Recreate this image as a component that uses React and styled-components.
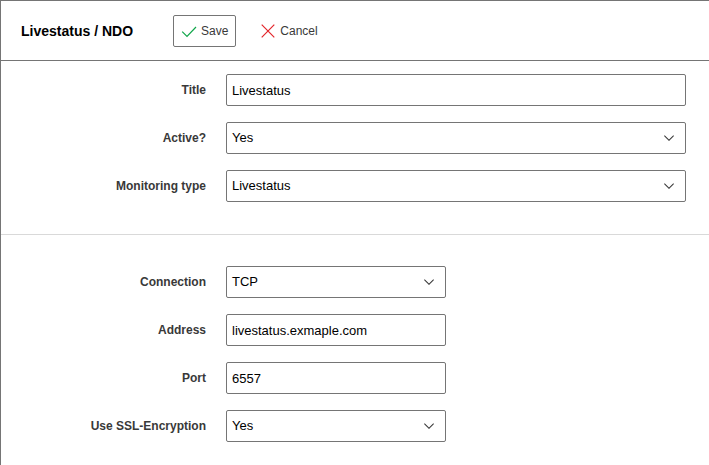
import React from "react";
import styled, { createGlobalStyle } from "styled-components";

const GlobalStyle = createGlobalStyle`
  *, *::before, *::after { box-sizing: border-box; }
  body {
    margin: 0;
    overflow: hidden;
    background: #fff;
    font-family: "Liberation Sans", Arial, sans-serif;
    font-size: 12px;
    color: #393939;
  }
`;

const Panel = styled.main`
  height: 100vh;
  border: solid #757575;
  border-width: 1px 0 0 1px;
`;

const Header = styled.header`
  display: flex;
  align-items: center;
  height: 60px;
  padding-left: 20px;
  border-bottom: 1px solid #757575;
`;

const Heading = styled.h1`
  width: 152px;
  margin: 0;
  font-size: 14px;
  line-height: 20px;
  color: #000;
`;

const ActionButton = styled.button`
  display: flex;
  align-items: center;
  gap: 4px;
  height: 32px;
  padding: 0 7px;
  margin-right: 16px;
  border: 1px solid ${(p) => (p.$outlined ? "#757575" : "transparent")};
  border-radius: 2px;
  background: #fff;
  font: inherit;
  line-height: 16px;
  color: #393939;
`;

const ActionIcon = styled.svg`
  display: block;
  width: 16px;
  height: 16px;
  fill: none;
  stroke: ${(p) => p.$color};
  stroke-width: 1.2;
`;

const Section = styled.section`
  display: flex;
  flex-direction: column;
  gap: 16px;
  padding: ${(p) => p.$top}px 23px 32px 0;

  & + & { border-top: 1px solid #d9d9d9; }
`;

const Row = styled.div`
  display: grid;
  grid-template-columns: 205px ${(p) => (p.$narrow ? "220px" : "1fr")};
  column-gap: 20px;
  align-items: center;
`;

const Label = styled.label`
  font-weight: bold;
  line-height: 16px;
  text-align: right;
`;

const TextInput = styled.input`
  width: 100%;
  height: 32px;
  padding: 1px 5px 0;
  border: 1px solid #757575;
  border-radius: 2px;
  outline: none;
  background: #fff;
  font-family: inherit;
  font-size: 13px;
  color: #000;
`;

const SelectBox = styled.div`
  display: flex;
  align-items: center;
  justify-content: space-between;
  height: 32px;
  padding: 0 8px 0 5px;
  border: 1px solid #757575;
  border-radius: 2px;
  font-size: 13px;
  line-height: 16px;
  color: #000;
`;

const Chevron = styled.svg`
  display: block;
  width: 16px;
  height: 16px;
  fill: #393939;
`;

const fields = {
  general: [
    { id: "title", label: "Title", value: "Livestatus" },
    { id: "active", label: "Active?", value: "Yes", select: true },
    { id: "type", label: "Monitoring type", value: "Livestatus", select: true },
  ],
  connection: [
    { id: "connection", label: "Connection", value: "TCP", select: true },
    { id: "address", label: "Address", value: "livestatus.exmaple.com" },
    { id: "port", label: "Port", value: "6557" },
    { id: "ssl", label: "Use SSL-Encryption", value: "Yes", select: true },
  ],
};

function Field({ id, label, value, select, narrow }) {
  return (
    <Row $narrow={narrow}>
      <Label htmlFor={select ? undefined : id}>{label}</Label>
      {select ? (
        <SelectBox>
          {value}
          <Chevron viewBox="0 0 16 16" aria-hidden="true">
            <path d="M8 11L3 6l.7-.7L8 9.6l4.3-4.3.7.7z" />
          </Chevron>
        </SelectBox>
      ) : (
        <TextInput id={id} defaultValue={value} />
      )}
    </Row>
  );
}

export default function App() {
  return (
    <>
      <GlobalStyle />
      <Panel>
        <Header>
          <Heading>Livestatus / NDO</Heading>
          <ActionButton $outlined>
            <ActionIcon $color="#10a64a" viewBox="0 0 16 16" aria-hidden="true">
              <path d="M1.2 8.6l4.8 4.8L15 4" />
            </ActionIcon>
            Save
          </ActionButton>
          <ActionButton>
            <ActionIcon $color="#e3262b" viewBox="0 0 16 16" aria-hidden="true">
              <path d="M1.7 1.7l12.6 12.6M14.3 1.7L1.7 14.3" />
            </ActionIcon>
            Cancel
          </ActionButton>
        </Header>
        <Section $top={13}>
          {fields.general.map((f) => (
            <Field key={f.id} {...f} />
          ))}
        </Section>
        <Section $top={31}>
          {fields.connection.map((f) => (
            <Field key={f.id} {...f} narrow />
          ))}
        </Section>
      </Panel>
    </>
  );
}
